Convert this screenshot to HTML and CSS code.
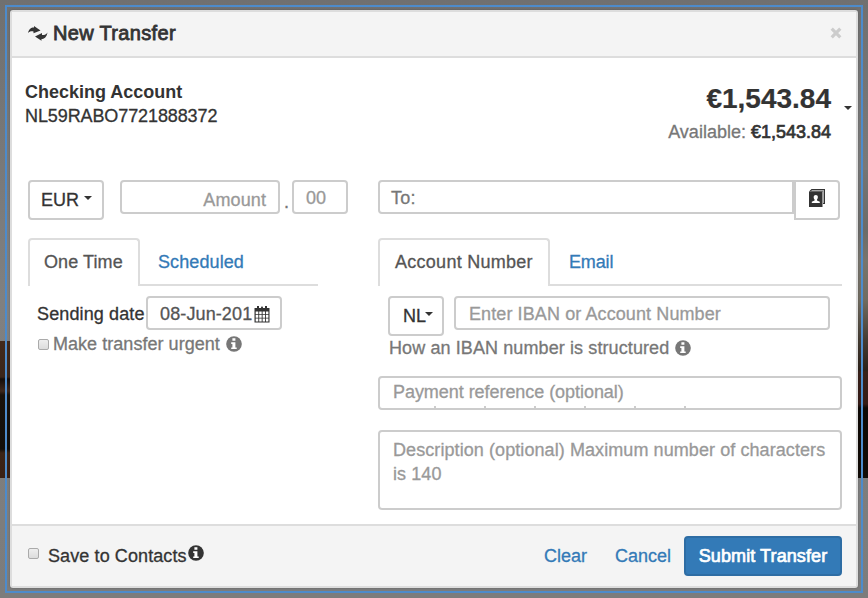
FILE: index.html
```html
<!DOCTYPE html>
<html lang="en">
<head>
<meta charset="utf-8">
<title>New Transfer</title>
<link rel="stylesheet" href="styles.css">
</head>
<body>
<svg width="0" height="0" class="defs">
  <symbol id="info" viewBox="0 0 16 16"><circle cx="8" cy="8" r="7.8"/><path fill="#fff" d="M6.400 2.300h3v2.500h-3zM5.200 6.200h4.200v5.200h1.300v1.700H5.200v-1.700h1.200V7.900H5.200z"/></symbol>
</svg>
<div class="backdrop">
<div class="frame">
<section class="modal">
  <header class="modal-header">
    <svg class="swap" width="20" height="15" viewBox="0 0 20 15"><path d="M0 7C1 2.500 3.500 1.300 6 1.500V0l6.500 4.500L5.500 7.200V5.500C3.500 5 1.500 5.300 0 7zM19.500 6.500C18.500 11.500 16 13 13.500 13V14.800L7 10.500l7-3.500V9C16 9.300 18 8.600 19.500 6.500z"/></svg>
    <h1>New Transfer</h1>
    <svg class="close" width="12" height="12" viewBox="0 0 12 12"><path d="M1.700 1.700l8.600 8.600M10.300 1.700l-8.600 8.600"/></svg>
  </header>
  <main class="modal-body">
    <div class="account">
      <div class="account-id"><b>Checking Account</b><span>NL59RABO7721888372</span></div>
      <div class="account-sum"><strong>€1,543.84</strong><span class="available">Available: <em>€1,543.84</em></span></div>
      <i class="caret account-caret"></i>
    </div>
    <div class="form">
      <div class="col-left">
        <div class="row">
          <div class="box btn currency"><span>EUR</span><i class="caret"></i></div>
          <div class="box amount">Amount</div>
          <span class="dot">.</span>
          <div class="box cents">00</div>
        </div>
        <nav class="tabs tabs-left"><span class="tab active">One Time</span><span class="tab">Scheduled</span></nav>
        <div class="sending">
          <span>Sending date</span>
          <div class="box date"><span>08-Jun-201</span>
            <svg width="16" height="17" viewBox="0 0 16 17"><path fill="#333" fill-rule="evenodd" d="M3 0h2v2h2V1.500L8 0l1 1.500V2h2V0h2v2h2.500v14.500H.5V2H3zM1.700 5.500v2.700h2.600V5.500zm3.500 0v2.700h2.500V5.500zm3.400 0v2.700h2.500V5.500zm3.400 0v2.700h2.400V5.500zM1.700 9v2.700h2.600V9zm3.500 0v2.700h2.500V9zm3.400 0v2.700h2.500V9zm3.400 0v2.700h2.400V9zM1.700 12.500v3h2.600v-3zm3.500 0v3h2.500v-3zm3.400 0v3h2.500v-3zm3.400 0v3h2.400v-3z"/></svg>
          </div>
        </div>
        <div class="urgent"><i class="check"></i><span>Make transfer urgent</span><svg class="info"><use href="#info"/></svg></div>
      </div>
      <div class="col-right">
        <div class="row">
          <div class="box to">To:</div>
          <div class="box btn book"><svg width="16" height="18" viewBox="0 0 16 18"><path fill="#333" d="M0 2.500L2.500 0H16v15h-2V2.500z"/><path fill="#aaa" d="M2 2l1-1h12v13h-1V2z"/><path fill="#333" d="M0 2.500h13.500V18H0z"/><path fill="#fff" d="M6.800 6c2.600 0 2.500 3 1.200 4.500v1l2.800 1.200V14h-8v-1.300l2.800-1.200v-1C4.300 9 4.200 6 6.800 6z"/></svg></div>
        </div>
        <nav class="tabs"><span class="tab active acct">Account Number</span><span class="tab">Email</span></nav>
        <div class="iban">
          <div class="box btn country"><span>NL</span><i class="caret"></i></div>
          <div class="box iban-input">Enter IBAN or Account Number</div>
        </div>
        <div class="hint"><span>How an IBAN number is structured</span><svg class="info"><use href="#info"/></svg></div>
        <div class="box payment"><span>Payment reference (optional)</span></div>
        <div class="box description">Description (optional) Maximum number of characters<br>is 140</div>
      </div>
    </div>
  </main>
  <footer class="modal-footer">
    <i class="check"></i><span class="save">Save to Contacts</span><svg class="info dark"><use href="#info"/></svg>
    <span class="link clear">Clear</span><span class="link cancel">Cancel</span><span class="submit">Submit Transfer</span>
  </footer>
</section>
</div>
</div>
</body>
</html>
```
FILE: styles.css
```css
* { box-sizing: border-box; }
body { margin: 0; font: 18px/24px "Liberation Sans", Arial, sans-serif; color: #333; -webkit-text-stroke: .3px; white-space: nowrap; overflow: hidden; }
.defs { position: absolute; }
.backdrop {
  width: 868px; height: 598px; padding: 5px;
  background:
    linear-gradient(#42291c, #3a251a 36px, #140d09 38px, #3e281d 50px, #19120c 54px, #120e0a 108px, #3b2317 112px, #3a2014) 0 341px / 12px 137px no-repeat,
    linear-gradient(#747474, #6c6b69 60px, #77746d 90px, #706b60 130px, #443b32 170px, #2c2119 200px, #382019 202px, #351a16 234px, #0d0805 238px, #120b06) 100% 170px / 12px 308px no-repeat,
    linear-gradient(#707070, #808080 50%, #7c7c7c);
}
.frame { width: 858px; height: 588px; border: 2px solid #4d8bcb; padding: 3px; }
.modal { width: 848px; height: 578px; border: 2px solid #ddd; border-radius: 3px; background: #fff; display: flex; flex-direction: column; box-shadow: 0 0 2px rgba(0,0,0,.25); overflow: hidden; }
.modal-header { height: 46px; flex: none; background: #f4f4f4; border-bottom: 2px solid #ddd; display: flex; align-items: center; padding: 0 14px 2px 16px; }
.swap { fill: #333; margin-top: 1px; }
h1 { margin: 0 auto 0 5px; font-size: 20px; font-weight: 400; letter-spacing: .33px; -webkit-text-stroke: .8px; }
.close { stroke: #ccc; stroke-width: 3.2; margin-top: -1px; }
.modal-body { height: 466px; padding: 22px 14px 0 16px; flex: none; }
.account { display: flex; height: 100px; }
.account-id { margin-left: -3px; display: flex; flex-direction: column; flex: 1; }
.account-id span { letter-spacing: -.1px; }
.account-id b { -webkit-text-stroke: 0; }
.account-sum { display: flex; flex-direction: column; align-items: flex-end; padding-top: 3px; }
.account-sum strong { font-size: 28px; line-height: 32px; -webkit-text-stroke: .2px; }
.available { color: #777; line-height: 24px; margin-top: 5px; }
.available em { font-style: normal; color: #333; -webkit-text-stroke: .7px; }
.caret { border: 4px solid transparent; border-top-color: #333; border-bottom: 0; flex: none; }
.account-caret { margin: 26px -10px 0 13px; height: 4px; }
.form { display: flex; }
.col-left { width: 350px; }
.col-right { width: 464px; }
.row { display: flex; height: 58px; align-items: flex-start; }
.box { border: 2px solid #ccc; border-radius: 4px; height: 34px; line-height: 32px; background: #fff; color: #999; }
.btn { height: 40px; color: #333; display: flex; align-items: center; }
.currency { width: 76px; padding-left: 11px; margin-right: 16px; }
.currency .caret { margin: -4px 0 0 5px; }
.amount { width: 160px; text-align: right; padding-right: 12px; line-height: 36px; letter-spacing: .1px; }
.dot { width: 12px; padding-left: 4px; padding-top: 10px; color: #777; }
.cents { width: 56px; padding-left: 12px; }
.to { width: 416px; padding-left: 11px; color: #777; border-radius: 4px 0 0 4px; letter-spacing: .3px; }
.book { width: 46px; justify-content: center; border-radius: 0 4px 4px 0; padding-bottom: 4px; }
.tabs { height: 48px; display: flex; border-bottom: 2px solid #ddd; width: 464px; }
.tabs-left { width: 290px; }
.tab { height: 46px; line-height: 48px; padding: 0 18px; color: #337ab7; letter-spacing: .1px; }
.tab.active { height: 48px; width: 112px; padding: 0 14px; line-height: 44px; border: 2px solid #ddd; border-bottom: 0; border-radius: 4px 4px 0 0; background: #fff; color: #555; }
.tab.acct { width: 172px; padding: 0 15px; letter-spacing: .27px; }
.acct + .tab { padding-left: 19px; letter-spacing: -.15px; }
.sending { display: flex; height: 44px; padding: 10px 0 0 9px; }
.sending > span { width: 109px; line-height: 36px; letter-spacing: .12px; }
.date { width: 136px; display: flex; padding-left: 12px; color: #555; }
.date span { width: 94px; overflow: hidden; letter-spacing: .12px; }
.date svg { margin-top: 8px; flex: none; }
.urgent { display: flex; align-items: center; padding-left: 10px; height: 28px; color: #777; }
.urgent span { margin: 0 6px 0 4px; letter-spacing: .04px; }
.check { width: 11px; height: 11px; border: 1px solid #aaa; border-radius: 2px; background: linear-gradient(#eee, #dcdcdc); flex: none; }
.info { width: 16px; height: 16px; fill: #777; flex: none; }
.iban { display: flex; padding: 10px 0 0 10px; }
.country { width: 56px; padding-left: 13px; margin-right: 10px; }
.country .caret { margin: -4px 0 0 -1px; }
.iban-input { width: 376px; padding-left: 13px; letter-spacing: .1px; }
.hint { display: flex; align-items: center; padding-left: 11px; height: 24px; color: #777; letter-spacing: .1px; }
.hint span { margin-right: 6px; }
.payment { margin: 16px 0 20px; padding-left: 13px; line-height: 28px; letter-spacing: -.05px; background: repeating-linear-gradient(90deg, #ccc 0 2px, transparent 2px 50px) 54px 100% / 252px 2px no-repeat; }
.description { height: 80px; padding: 6px 13px; line-height: 24px; letter-spacing: .08px; }
.modal-footer { height: 62px; border-top: 2px solid #ddd; background: #f4f4f4; display: flex; align-items: center; padding: 0 14px 0 16px; }
.modal-footer .check { margin-top: -5px; }
.save { margin: 0 1px 0 9px; letter-spacing: .1px; }
.info.dark { fill: #333; margin: -6px auto 0 0; }
.link { color: #337ab7; }
.clear { margin-right: 28px; }
.cancel { margin-right: 13px; }
.submit { width: 158px; height: 40px; line-height: 36px; text-align: center; border: 2px solid #2e6da4; border-radius: 4px; background: #337ab7; color: #fff; -webkit-text-stroke: .7px; letter-spacing: .1px; }
```
